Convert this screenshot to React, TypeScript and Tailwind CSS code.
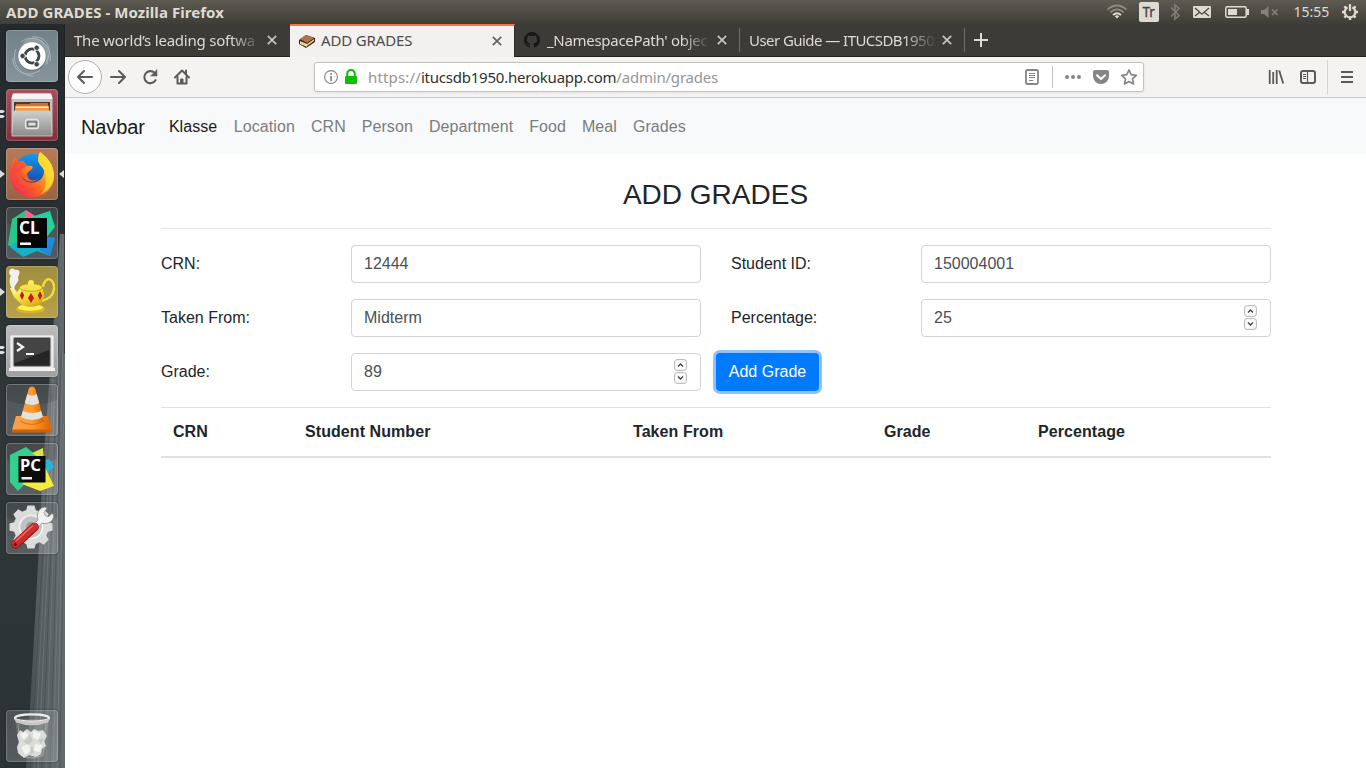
import type { ReactNode } from "react";

const UI = "font-['Noto_Sans','Open_Sans',sans-serif]";

function Tile({ bg, children, left, right }: { bg: string; children: ReactNode; left?: "one" | "two"; right?: boolean }) {
  return (
    <div className="relative h-[52px] w-full shrink-0 pl-[6px]">
      <div className={`h-[52px] w-[52px] overflow-hidden rounded-[4px] shadow-[inset_0_0_0_1px_rgba(255,255,255,0.2),0_0_2px_rgba(0,0,0,0.5)] ${bg}`}>
        <svg viewBox="0 0 52 52" className="h-[52px] w-[52px]">{children}</svg>
      </div>
      {left === "one" && (
        <svg viewBox="0 0 5 8" className="absolute top-[22px] left-0 h-[8px] w-[5px]"><path d="M0 0 5 4 0 8z" fill="#ddd" /></svg>
      )}
      {left === "two" && (
        <svg viewBox="0 0 5 8" className="absolute top-[21px] left-0 h-[8px] w-[5px]"><path d="M0 0h3l2 1.2L3 3H0zM0 5h3l2 1.2L3 8H0z" fill="#ddd" /></svg>
      )}
      {right && (
        <svg viewBox="0 0 5 8" className="absolute top-[22px] right-[1px] h-[8px] w-[5px]"><path d="M5 0 0 4 5 8z" fill="#ddd" /></svg>
      )}
    </div>
  );
}

const GLASS = "bg-gradient-to-b from-white/15 to-white/20";

function Gloss() {
  return <path d="M1 4Q1 1 4 1H48Q51 1 51 4V16Q26 26 1 16z" fill="#000" opacity=".12" />;
}

function Launcher() {
  return (
    <aside className="relative flex w-[65px] shrink-0 flex-col gap-[7px] overflow-hidden bg-gradient-to-b from-[#23292c] via-[#303739] to-[#2c3336] pt-[6px] pb-[6px]">
      <svg viewBox="0 0 65 744" className="absolute inset-0 h-full w-full">
        <defs>
          <linearGradient id="bark" x1="0" x2="1" y1="0" y2="0">
            <stop offset="0" stopColor="#454c4f" /><stop offset=".3" stopColor="#545b5e" /><stop offset=".6" stopColor="#5a6265" /><stop offset="1" stopColor="#646b6e" />
          </linearGradient>
        </defs>
        <path d="M60 210C53 310 46 400 42 460C37 560 32 660 26 744H65V210z" fill="url(#bark)" />
        <g fill="none" strokeWidth=".8" opacity=".3">
          <path d="M53 350Q45 540 34 744M59 330Q53 540 46 744M62.500 330Q58 560 53 744" stroke="#9aa1a4" />
          <path d="M51 370Q43 540 30 744M57 350Q50 560 42 744M61 330Q56 560 50 744M64 400Q63 560 60 744" stroke="#272e31" />
          <path d="M55 360Q48 550 38 744M63.500 400Q61 560 57 744" stroke="#a5abae" />
        </g>
        <path d="M64.500 0V330" stroke="#1d2123" opacity=".6" />
      </svg>
      <Tile bg="bg-gradient-to-b from-[#728087] to-[#87949b]">
        <path d="M19 10C35 3 46 16 42 34L34 37 15 18z" fill="#b7c1c5" opacity=".4" />
        <g fill="none" stroke="#c7d1d5" strokeWidth="1" opacity=".6">
          <path d="M26 7C42 5 48 23 39 33" /><path d="M7 28C6 42 22 49 34 40" /><path d="M15 12C27 2 47 13 44 31" /><path d="M10 19C5 31 12 45 27 46" />
        </g>
        <circle cx="26.5" cy="27.2" r="14" fill="#4f5a60" opacity=".45" /><circle cx="26" cy="26" r="13.7" fill="#fff" />
        <circle cx="26" cy="26" r="6.9" fill="none" stroke="#3d474c" strokeWidth="3" />
        <path d="M26 26h-9M26 26l5-8.7M26 26l5 8.7" stroke="#fff" strokeWidth="1.6" /><circle cx="26" cy="26" r="5.4" fill="#fff" />
        <g fill="#3d474c" stroke="#fff" strokeWidth=".8"><circle cx="16.6" cy="26" r="2.7" /><circle cx="30.7" cy="17.7" r="2.7" /><circle cx="30.7" cy="34.3" r="2.7" /></g>
      </Tile>
      <Tile bg="bg-gradient-to-b from-[#a3525d] to-[#82313c]" left="two">
        <defs><linearGradient id="cab" x2="0" y2="1"><stop stopColor="#cfcfcf" /><stop offset="1" stopColor="#8b8b8b" /></linearGradient></defs>
        <path d="M5.5 9Q6 4.5 9 4.5H43Q46 4.5 46.5 9V44H5.5z" fill="#c3c3c3" /><path d="M7 4.5H45L46.5 10H5.5z" fill="#f4f4f4" />
        <path d="M8 13H44V24H8z" fill="#4b3934" /><path d="M10 15h13l2-1h17v9H9z" fill="#da6c2d" /><path d="M9 17h34v6H9z" fill="#ef9b39" /><path d="M10 17.6h32v1.4H10z" fill="#fff2cc" />
        <path d="M7 22H45L46 47H6z" fill="url(#cab)" stroke="#ccc" strokeWidth=".8" /><rect x="19.5" y="30.5" width="13" height="9" rx="2.2" fill="#aaa" stroke="#e4e4e4" strokeWidth="1.3" /><rect x="21.8" y="33" width="8.4" height="4.2" fill="#ddd" stroke="#555" />
      </Tile>
      <Tile bg="bg-gradient-to-b from-[#b57b5d] to-[#9b6346]" left="one" right>
        <defs>
          <linearGradient id="ffx" x1="1" y1="0" x2="0" y2="1"><stop stopColor="#fff04a" /><stop offset=".35" stopColor="#ffb21a" /><stop offset=".62" stopColor="#ff5c24" /><stop offset="1" stopColor="#e81870" /></linearGradient>
          <linearGradient id="globe" x2="0" y2="1"><stop stopColor="#1599ee" /><stop offset="1" stopColor="#193da0" /></linearGradient>
        </defs>
        <circle cx="26" cy="23" r="17" fill="url(#globe)" />
        <path d="M34 4C41 9 48 16 48 28C48 41 38 49 26 49C13 49 4 39 4 26C4 19 6 13 10 9L11 14C16 12 18 13 21 18C25 17 28 18 26 21L21 25C21 32 27 35 33 30C27 36 19 34 15 28C20 39 39 36 38 22C36 18 32 16 32 11C32 8 33 6 34 4z" fill="url(#ffx)" />
        <path d="M34 4C41 9 48 16 48 28C47 38 40 44 35 46C42 38 40 29 38 22C36 18 32 16 32 11z" fill="#ffdf32" opacity=".75" />
        <path d="M10 10C4 19 4 31 10 38C13 43 21 47 29 44C15 45 9 32 15 22L21 18C18 13 14 12 11 14z" fill="#fa443e" opacity=".7" />
      </Tile>
      <Tile bg={GLASS}>
        <Gloss />
        <path d="M6 12L20 3L22 29L12 44L2 38z" fill="#27c58a" /><path d="M20 3L34 12L16 22z" fill="#f66591" />
        <path d="M25 10L44 4L49 20L40 31L27 20z" fill="#21d39b" /><path d="M4 40L18 28L49 31L44 49L31 44L17 50z" fill="#18b0c9" /><path d="M38 30L49 31L44 49L34 43z" fill="#1b8bdf" />
        <path d="M11 11H41V41H11z" fill="#050505" />
        <text x="13" y="26.5" fill="#fff" fontFamily="Noto Sans" fontWeight="700" fontSize="17">CL</text><path d="M14 35.5H25V38H14z" fill="#fff" />
      </Tile>
      <Tile bg="bg-gradient-to-b from-[#9f8e3f] to-[#b6a14c]" left="one">
        <defs><linearGradient id="pot" x2="1" y2="1"><stop stopColor="#fffa9a" /><stop offset=".45" stopColor="#f4db35" /><stop offset="1" stopColor="#c99a0b" /></linearGradient></defs>
        <path d="M37 21C39 9 49 12 48 23C47 32 40 34 35 35" fill="none" stroke="#f2dc39" strokeWidth="2.4" /><ellipse cx="24.5" cy="43" rx="14.5" ry="4.5" fill="#dbb51b" /><ellipse cx="24.5" cy="41.5" rx="12.5" ry="3.3" fill="#fff15c" />
        <path d="M11 26L8 22H4L8 31L16 39Q25 43 33 39C39 34 39 27 36 22H14z" fill="url(#pot)" /><ellipse cx="25" cy="21.5" rx="11.5" ry="3.8" fill="#f7e347" stroke="#b28c10" strokeWidth=".7" /><circle cx="25" cy="17" r="3" fill="#ffe85a" />
        <g fill="#be1923"><path d="m16 25 2.2 4.5-2.2 4.5-2.2-4.5zM25 27l3 5-3 5-3-5zM34 25l2.2 4.5-2.2 4.5-2.2-4.5z" /></g>
        <path d="M6 23C2 15 4 12 5 10C0 5 6 0 9 4C15 3 14 8 12 11C14 16 9 17 8 23z" fill="#f4f4f4" opacity=".95" />
      </Tile>
      <Tile bg="bg-gradient-to-b from-[#bcbcbc] to-[#a0a0a0]" left="two">
        <path d="M5 11H47V43H5z" fill="#dfdfdf" stroke="#fff" /><path d="M3 43H49V46H3z" fill="#f2f2f2" />
        <path d="M8 13H44V41H8z" fill="#252525" stroke="#555" /><path d="M9 14H43V25L9 38z" fill="#555" opacity=".65" />
        <path d="M11 18 17 22 11 26" fill="none" stroke="#f4f4f4" strokeWidth="2.2" /><path d="M20 29h8" stroke="#f4f4f4" strokeWidth="2.2" />
      </Tile>
      <Tile bg={GLASS}>
        <Gloss />
        <defs>
          <linearGradient id="cone"><stop stopColor="#f4a153" /><stop offset=".5" stopColor="#ff9a2c" /><stop offset="1" stopColor="#dc6300" /></linearGradient>
        </defs>
        <path d="M10 32H42L46 46H6z" fill="url(#cone)" /><path d="M6 45.5H46V48.5H6z" fill="#d35f00" />
        <path d="M23 4Q26 1 29 4L38 37Q26 44 14 37z" fill="url(#cone)" /><path d="M14 37Q26 44 38 37" fill="none" stroke="#cf6a10" strokeWidth=".8" /><path d="M21.3 10Q26 13 30.7 10L33.2 19Q26 23 18.8 19zM16.900 27Q26 31 35.100 27L37 33Q26 39 15 33z" fill="#e2e3df" />
      </Tile>
      <Tile bg={GLASS}>
        <Gloss />
        <path d="M4 12L20 4L30 12L17 43L12 48L4 39z" fill="#33cf8c" /><path d="M26 10L37 5L38 19z" fill="#d7e442" /><path d="M38 17L43 16L48 24L39 31z" fill="#21b8db" /><path d="M38 22L48 43L34 48L16 41z" fill="#f4ec3d" />
        <path d="M12.5 13H39.5V39.5H12.5z" fill="#0b0b0b" /><text x="14" y="27.5" fill="#fff" fontFamily="Noto Sans" fontWeight="700" fontSize="16.5">PC</text><path d="M15.5 34H26V36.5H15.5z" fill="#eee" />
      </Tile>
      <Tile bg={GLASS}>
        <Gloss />
        <g transform="translate(25 25)">
          {[0, 45, 90, 135].map((a) => <path key={a} transform={`rotate(${a})`} d="M-5-16-3.5-21.500h7L5-16V16L3.500 21.500h-7L-5 16z" fill="#dcdcdc" />)}
          <circle r="17.5" fill="#dcdcdc" /><circle r="11.5" fill="#c2c2c2" stroke="#f4f4f4" strokeWidth="1.5" /><circle r="5" fill="#9a9a9a" />
        </g>
        <path d="M27 23L32 18C30 11 33 6 39 5L41 6L38 10.500L39.500 14L43 14.500L46 11.500L47.500 13C48 19 42 23 36 21L31 27z" fill="#f2f2f2" stroke="#8d8d8d" strokeWidth=".8" />
        <path d="M9.500 42.500L28.500 25" stroke="#8c1512" strokeWidth="8.600" strokeLinecap="round" /><path d="M9.500 42L28.500 24.500" stroke="#cf2d2b" strokeWidth="7.200" strokeLinecap="round" /><path d="M10 39L27 23.500" stroke="#e8736b" strokeWidth="1.4" /><circle cx="9.3" cy="42.5" r="1.6" fill="#511" />
      </Tile>
      <div className="mt-auto">
        <Tile bg={GLASS}>
          <path d="M9 9H43L38 46Q26 51 14 46z" fill="#ccd1d2" opacity=".18" /><path d="M12 14L15 45Q26 51 37 45L40 14" fill="none" stroke="#a7adae" opacity=".7" />
          <ellipse cx="26" cy="8" rx="17" ry="3.7" fill="none" stroke="#f0f0e9" strokeWidth="2.2" /><path d="M8.500 8.500Q26 15 43.500 8.500L42 12.500Q26 18 10 12.500z" fill="#c9cac6" />
          <path d="M11 25l3-5 3 2 4-3 4 3 3-3 5 2 4-1 4 6-3 5 2 5-4 3-1 5-5 3-7-2-5 3-6-5-1-6 2-5z" fill="#dcddda" />
          <path d="M14 24l6-2 4 6-6 3zM27 21l8 2-3 7-5-3zM15 37l7-3 3 7-6 4zM29 34l7 1-2 7-6-1z" fill="#f3f3f0" /><path d="M24 24l3 7-5 4-5-4zM32 30l6-2-3 6zM26 35l2 8-5 1z" fill="#b9bdbb" opacity=".6" />
        </Tile>
      </div>
    </aside>
  );
}

function TopBar() {
  return (
    <header className={`flex h-[24px] shrink-0 items-center justify-between bg-gradient-to-b from-[#5d5b51] to-[#3e3d38] text-[#dfdbd2] ${UI}`}>
      <div className="pl-[6px] text-[15px] leading-[24px] font-bold whitespace-nowrap"><span className="tracking-[0.06px]">ADD GRADES - Mozilla Firefox</span></div>
      <svg viewBox="0 0 260 24" className="h-[24px] w-[260px]" fontFamily="Noto Sans">
        <g fill="none" stroke="#8e8b80" strokeWidth="1.7"><path d="M1.5 9.5Q11 1.5 20.5 9.5" /><path d="M4.3 12.3Q11 6.5 17.7 12.3" /><path d="M7 15Q11 11.5 15 15" stroke="#dfdbd2" /></g><path d="M8.8 16.2Q11 14.4 13.2 16.2L11 18.6z" fill="#dfdbd2" />
        <rect x="33" y="2" width="20" height="20" rx="2" fill="#dfdbd2" /><text x="36.5" y="17.3" fontSize="13.5" fill="#45443e" stroke="#45443e" strokeWidth=".3">Tr</text>
        <path d="M65 7.5 73 15.5 69 19V5L73 8.5 65 16.5" fill="none" stroke="#84817a" strokeWidth="1.5" />
        <rect x="87" y="6" width="18" height="12" rx="1" fill="#dfdbd2" /><path d="m89 8 7 6.2L103 8M89 16l4.800-3.800M103 16l-4.800-3.800" fill="none" stroke="#4a4943" strokeWidth="1.3" />
        <rect x="119.8" y="6.8" width="20.4" height="10.4" rx="1.5" fill="none" stroke="#dfdbd2" strokeWidth="1.5" /><path d="M141 9h2v6h-2z" fill="#dfdbd2" /><path d="M122 9h9v6h-9z" fill="#dfdbd2" />
        <path d="M155 10h3l4.500-4v12L158 14h-3z" fill="#84817a" /><path d="m166 9.500 5.500 5.500m0-5.500-5.500 5.500" stroke="#84817a" strokeWidth="1.6" />
        <text x="187.5" y="17" fontSize="14" fill="#dfdbd2">15:55</text>
        <g stroke="#dfdbd2" fill="none" transform="translate(244 12)">
          <path d="M-2.400-4.700A5.300 5.300 0 1 0 2.400-4.700" strokeWidth="2.2" /><path d="M0-8V-1" strokeWidth="2.2" />
          <path d="M-5.600-5.600-4-4M5.600-5.600 4-4M-8 0h2.500M8 0H5.500M-5.600 5.600-4 4M5.600 5.600 4 4M0 8V5.500" strokeWidth="2.4" />
        </g>
      </svg>
    </header>
  );
}

function Close({ dark }: { dark?: boolean }) {
  return <svg viewBox="0 0 10 10" className="h-[10px] w-[10px] shrink-0"><path d="m.8.8 8.400 8.400m0-8.400L.8 9.200" stroke={dark ? "#65635e" : "#c9c6bc"} strokeWidth="1.7" /></svg>;
}

function Tabs() {
  return (
    <div className={`flex h-[33px] shrink-0 bg-[#3c3b37] text-[15px] leading-[32px] text-[#dfdbd2] ${UI}`}>
      <div className="flex w-[225px] items-center border-b border-[#232220] pl-[9px]">
        <span className="w-[187px] [mask-image:linear-gradient(to_right,black_84%,transparent_100%)] whitespace-nowrap"><span className="tracking-[-0.22px]">The world’s leading softwa</span></span>
        <span className="ml-[6px] flex"><Close /></span>
      </div>
      <div className="flex w-[225px] items-center border-r border-r-[#302f2c] border-t-2 border-t-[#f07746] bg-[#f2f1f0] pb-[2px] pl-[9px] leading-[29px] text-[#4c4c4c]">
        <svg viewBox="0 0 16 14" className="h-[14px] w-[16px] shrink-0"><path d="M0 6 7 1l9 3v4l-9 6-7-4z" fill="#382416" /><path d="m1 5 6-4 8 3-7 5z" fill="#b0744a" /><path d="M1 7l7 3v3L1 10z" fill="#ead9a5" /><path d="m8 10 7-5v2l-7 5z" fill="#e4c994" /></svg>
        <span className="ml-[6px] w-[164px] whitespace-nowrap"><span className="tracking-[-0.15px]">ADD GRADES</span></span><span className="ml-[7px] flex"><Close dark /></span>
      </div>
      <div className="flex w-[225px] items-center border-b border-[#232220] pl-[9px]">
        <svg viewBox="0 0 16 16" className="h-[16px] w-[16px] shrink-0"><path d="M8 0a8 8 0 0 0-2.53 15.59c.4.07.55-.17.55-.38v-1.49C3.78 14.2 3.3 12.76 3.3 12.76c-.36-.93-.9-1.17-.9-1.17-.73-.5.06-.49.06-.49.8.06 1.23.83 1.23.83.72 1.23 1.88.88 2.34.67.07-.52.28-.88.5-1.08-1.77-.2-3.64-.89-3.64-3.95 0-.87.31-1.59.82-2.15-.08-.2-.35-1.01.08-2.12 0 0 .67-.21 2.2.82a7.5 7.5 0 0 1 4 0c1.53-1.03 2.2-.82 2.2-.82.43 1.11.16 1.92.08 2.12.51.56.82 1.28.82 2.15 0 3.07-1.87 3.75-3.65 3.95.29.25.54.73.54 1.48v2.2c0 .21.15.46.55.38A8 8 0 0 0 8 0Z" fill="#171717" /></svg>
        <span className="ml-[7px] w-[164px] [mask-image:linear-gradient(to_right,black_82%,transparent_100%)] whitespace-nowrap"><span className="tracking-[-0.3px]">_NamespacePath' objec</span></span><span className="ml-[6px] flex"><Close /></span>
      </div>
      <div className="flex w-[225px] items-center border-b border-[#232220]">
        <i className="-ml-px h-[24px] w-px bg-[#706f69]" />
        <span className="ml-[9px] w-[188px] [mask-image:linear-gradient(to_right,black_82%,transparent_100%)] whitespace-nowrap"><span className="tracking-[-0.55px]">User Guide — ITUCSDB1950</span></span><span className="ml-[5px] flex"><Close /></span>
      </div>
      <div className="flex flex-1 items-center border-b border-[#232220]">
        <i className="-ml-px h-[24px] w-px bg-[#706f69]" />
        <svg viewBox="0 0 14 14" className="ml-[9px] h-[14px] w-[14px]"><path d="M7 0v14M0 7h14" stroke="#dfdbd2" strokeWidth="2" /></svg>
      </div>
    </div>
  );
}

function Toolbar() {
  return (
    <div className="flex h-[41px] shrink-0 items-center border-b border-[#c9c8c6] bg-[#f4f3f2]">
      <svg viewBox="0 0 135 40" className="h-[40px] w-[135px] shrink-0" fill="none" stroke="#5c5b59" strokeWidth="2" strokeLinecap="round" strokeLinejoin="round">
        <circle cx="20" cy="20" r="16.5" fill="#fcfcfc" stroke="#b1b0ae" strokeWidth="1" />
        <path d="M27 20H13m6-6-6 6 6 6M46 20h14m-6-6 6 6-6 6" />
        <path d="M90.500 23.200A6 6 0 1 1 89.500 15.800" strokeWidth="2.1" /><path d="M92 12.800v6.200h-6.200z" fill="#5c5b59" strokeWidth=".5" />
        <path d="M110 20.500 117 13.500l7 7" /><path d="M112.500 20v6.500h9V20" /><path d="M121 13.500v3" /><path d="M116 22h2v4h-2z" fill="#5c5b59" strokeWidth="1" />
      </svg>
      <div className={`ml-[114px] flex h-[30px] w-[830px] shrink-0 items-center rounded-[3px] border border-[#c1c0bd] bg-white text-[15px] whitespace-nowrap text-[#969696] shadow-[0_1px_3px_rgba(0,0,0,0.08)] ${UI}`}>
        <svg viewBox="0 0 50 28" className="h-[28px] w-[50px] shrink-0"><circle cx="16" cy="14" r="6.4" fill="none" stroke="#858585" strokeWidth="1.1" /><path d="M15.200 10h1.700v1.700h-1.700zM15.200 13h1.700v5h-1.700z" fill="#858585" /><rect x="30" y="13" width="12" height="8" rx="1" fill="#12bc00" /><path d="M32.300 14v-3.300a3.700 3.700 0 0 1 7.400 0V14" fill="none" stroke="#12bc00" strokeWidth="2.1" /></svg>
        <span className="ml-[3px] tracking-[-0.2px]"><span className="tracking-[0.15px]">https://</span><span className="tracking-[-0.22px] text-[#303030]">itucsdb1950.herokuapp.com</span>/admin/grades</span>
        <svg viewBox="0 0 123 28" className="ml-auto h-[28px] w-[123px] shrink-0">
          <rect x="6" y="7" width="12" height="14" rx="1.5" fill="none" stroke="#858585" strokeWidth="1.8" /><path d="M9 10.500h6M9 12.500h6M9 14.500h6M9 17.500h4" stroke="#858585" />
          <path d="M32.500 3v22" stroke="#c2c2c2" />
          <g fill="#858585"><circle cx="47" cy="14" r="2" /><circle cx="53" cy="14" r="2" /><circle cx="59" cy="14" r="2" /></g>
          <path d="M75 7h12a2 2 0 0 1 2 2v4a8 8 0 0 1-16 0V9a2 2 0 0 1 2-2z" fill="#858585" /><path d="m77 12.200 4 3.800 4-3.800" fill="none" stroke="#fff" strokeWidth="2" strokeLinecap="round" strokeLinejoin="round" />
          <path d="m109 7 2.200 4.700 5.100.6-3.800 3.500 1 5.100-4.500-2.500-4.500 2.500 1-5.100-3.800-3.500 5.100-.6z" fill="none" stroke="#858585" strokeWidth="1.7" strokeLinejoin="round" />
        </svg>
      </div>
      <svg viewBox="0 0 106 40" className="ml-auto h-[40px] w-[106px]" fill="none" stroke="#5c5b59">
        <path d="M9.700 13v14M13.200 15v12M16.700 13v14" strokeWidth="1.8" /><path d="m19.200 13.500 4 13" strokeWidth="1.8" />
        <rect x="41" y="14" width="14" height="12" rx="2" strokeWidth="2" /><path d="M47.500 14v12" strokeWidth="1.2" /><path d="M43 17.500h3M43 19.500h3M43 21.500h3" />
        <path d="M67.500 3v34" stroke="#d4d3d0" /><path d="M81 15h12M81 20h12M81 25h12" strokeWidth="2" />
      </svg>
    </div>
  );
}

const CHEVRONS = [
  { id: "up", d: "M4 7.500 6.500 5 9 7.500" },
  { id: "down", d: "M4 4.500 6.500 7 9 4.500" },
];

function Field({ value, spin }: { value: string; spin?: boolean }) {
  return (
    <div className="flex h-[38px] items-center justify-between rounded-[4px] border border-[#ced4da] bg-white px-[12px] text-[#495057]">
      <span>{value}</span>
      {spin && (
        <span className="flex flex-col gap-px pr-px pb-[1px]">
          {CHEVRONS.map((c) => (
            <svg key={c.id} viewBox="0 0 13 12" className="h-[12px] w-[13px]"><rect x=".6" y=".6" width="11.8" height="10.8" rx="2.5" fill="#fafafa" stroke="#b5b5b5" /><path d={c.d} fill="none" stroke="#444" strokeWidth="1.4" /></svg>
          ))}
        </span>
      )}
    </div>
  );
}

const LINKS = ["Location", "CRN", "Person", "Department", "Food", "Meal", "Grades"];

function Page() {
  return (
    <main className="min-h-0 flex-1 bg-white font-['Liberation_Sans',Arial,sans-serif] text-[16px] leading-[24px] text-[#212529]">
      <nav className="flex h-[56px] items-center gap-[16px] bg-[#f8f9fa] pt-px pl-[16px] tracking-[0.07px] text-[#7c7d7d]">
        <span className="mr-[8px] text-[20px] leading-[30px] tracking-[-0.1px] text-[#191919]">Navbar</span>
        <span className="mr-[0.500px] text-[#191919]">Klasse</span>
        {LINKS.map((l) => <span key={l}>{l}</span>)}
      </nav>
      <div className="pr-[95px] pl-[96px]">
        <h3 className="pt-[24px] pr-px text-center text-[28px] leading-[34px]">ADD GRADES</h3>
        <hr className="mt-[16px] border-[#e5e5e5]" />
        <div className="mt-[16px] grid grid-cols-[190px_350px_190px_350px] items-center gap-y-[16px]">
          <span>CRN:</span><Field value="12444" /><span className="pl-[30px]">Student ID:</span><div className="ml-[30px] w-[350px]"><Field value="150004001" /></div>
          <span>Taken From:</span><Field value="Midterm" /><span className="pl-[30px]">Percentage:</span><div className="ml-[30px] w-[350px]"><Field value="25" spin /></div>
          <span>Grade:</span><Field value="89" spin />
          <button className="ml-[15px] h-[38px] w-[103px] rounded-[4px] bg-[#007bff] whitespace-nowrap text-white shadow-[0_0_0_3px_rgba(0,123,255,0.45)]">Add Grade</button>
        </div>
        <div className="mt-[16px] grid h-[51px] grid-cols-[132px_328px_251px_154px_245px] border-t border-b-2 border-[#dee2e6] pt-[12px] font-bold tracking-[0.07px]">
          {["CRN", "Student Number", "Taken From", "Grade", "Percentage"].map((h) => <span key={h} className="pl-[12px]">{h}</span>)}
        </div>
      </div>
    </main>
  );
}

export default function App() {
  return (
    <div className="flex h-[768px] w-[1366px] flex-col overflow-hidden">
      <TopBar />
      <div className="flex min-h-0 flex-1">
        <Launcher />
        <div className="flex min-w-0 flex-1 flex-col"><Tabs /><Toolbar /><Page /></div>
      </div>
    </div>
  );
}
